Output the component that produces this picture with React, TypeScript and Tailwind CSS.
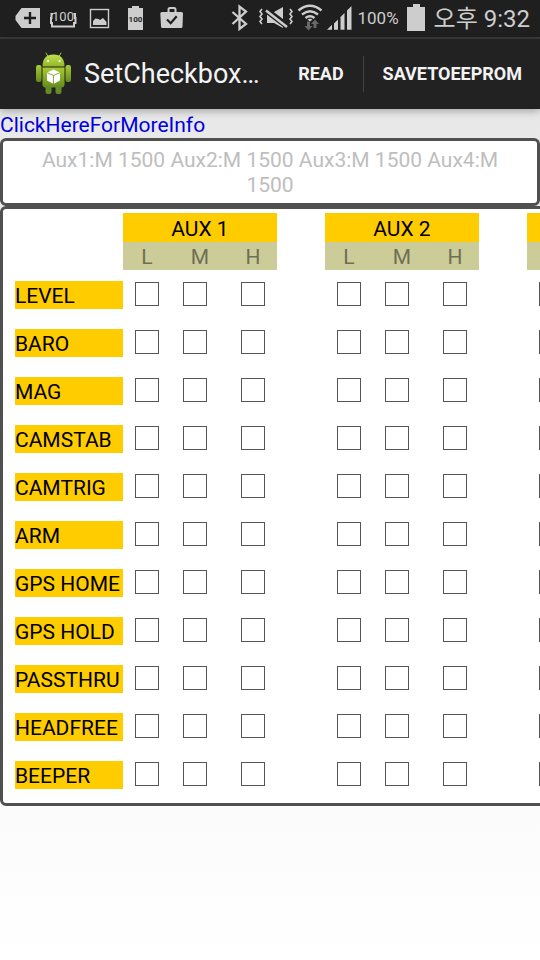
import React from "react";

const MODES = ["LEVEL", "BARO", "MAG", "CAMSTAB", "CAMTRIG", "ARM", "GPS HOME", "GPS HOLD", "PASSTHRU", "HEADFREE", "BEEPER"];
const CHANNELS = ["AUX 1", "AUX 2", "AUX 3", "AUX 4"];
const LEVELS = ["L", "M", "H"];

const HEAD_PAD = ["", "pl-[10px]", "pl-[10px]"];
const BOX_PAD = ["", "", "pl-[10px]"];

function NotificationIcons() {
  return (
    <div className="flex" aria-hidden="true">
      <svg className="h-[37px] w-9" viewBox="10 0 36 37">
        <path d="M21.5 8H40v20H21.5L15.5 20v-4z" fill="#cdcdcd" />
        <path d="M24 18h12M30 12v12" stroke="#1f1f1f" strokeWidth="2.4" />
      </svg>
      <svg className="h-[37px] w-9" viewBox="46 0 36 37">
        <path d="M53 14h-1.500v4h-.500v5h1v3.500h22V23h1.500v-5H75v-4h-1.500" fill="none" stroke="#cdcdcd" strokeWidth="2" />
        <text x="63" y="21" textAnchor="middle" fontSize="13" fill="#cdcdcd" fontFamily="Roboto, sans-serif">100</text>
      </svg>
      <svg className="h-[37px] w-9" viewBox="82 0 36 37">
        <rect x="90.500" y="9.500" width="18" height="18" fill="none" stroke="#cdcdcd" strokeWidth="1.400" />
        <path d="M93 25v-4l2.500-2.500 3 .5 1.500 1 3-2 3.500 4v3z" fill="#cdcdcd" />
      </svg>
      <svg className="h-[37px] w-9" viewBox="118 0 36 37">
        <path d="M132 6h7v2h4v22h-15V8h4z" fill="#cdcdcd" />
        <text x="135.500" y="21.500" textAnchor="middle" fontSize="8" fontWeight="700" fill="#1f1f1f" fontFamily="Roboto, sans-serif">100</text>
      </svg>
      <svg className="h-[37px] w-9" viewBox="154 0 36 37">
        <path d="M168.500 13v-3.500q0-1.500 1.500-1.500h4q1.500 0 1.500 1.500V13" fill="none" stroke="#cdcdcd" strokeWidth="2" />
        <path d="M162 12h19.500q1.500 0 1.500 1.500l-.5 13q0 1.500-1.500 1.500h-18.500q-1.500 0-1.500-1.500l-.7-13q0-1.500 1.700-1.500z" fill="#cdcdcd" />
        <path d="M167 19.500l3.700 3.700 6-7" fill="none" stroke="#1f1f1f" strokeWidth="2.200" />
      </svg>
    </div>
  );
}

function SystemIcons() {
  return (
    <div className="flex" aria-hidden="true">
      <svg className="h-[37px] w-7" viewBox="228 0 28 37">
        <path d="M232.500 12l13.500 12-6.500 5V6.500l6.500 5-13.500 12.500" fill="none" stroke="#cdcdcd" strokeWidth="2.300" />
      </svg>
      <svg className="h-[37px] w-10" viewBox="256 0 40 37">
        <path d="M262 9l-2 2.500 2 2.500-2 2.500 2 2.500-2 2.500 2 2.500M290 9l2 2.500-2 2.500 2 2.500-2 2.500 2 2.500-2 2.500" fill="none" stroke="#cdcdcd" strokeWidth="1.600" />
        <path d="M267 12h7l9-5v21l-9-5h-7z" fill="#cdcdcd" />
        <path d="M266 10l21 16" stroke="#1f1f1f" strokeWidth="6" />
        <path d="M266 10.500l21 16.500" stroke="#cdcdcd" strokeWidth="2.500" />
      </svg>
      <svg className="h-[37px] w-[30px]" viewBox="296 0 30 37">
        <path d="M298.500 10.500q11.500-9.500 23 0M302 14.500q8-6.500 16 0M305.500 18q4.500-3.500 9 0" fill="none" stroke="#cdcdcd" strokeWidth="2.300" />
        <path d="M307.500 19.500q2.500-1.500 5 0l-2.500 2z" fill="#cdcdcd" />
        <path d="M307 21.500h3v4.500h2.500l-4 4.500-4-4.500h2.500zM313.500 28h3v-4h2.500l-4-4.500-4 4.500h2.500z" fill="#686868" />
      </svg>
      <svg className="h-[37px] w-7" viewBox="326 0 28 37">
        <path d="M327 29.700l5-5v5zM334 23.500l4-4v10.200h-4zM340.500 17l4-4v16.700h-4zM347 10.500l4.500-4.500v23.700h-4.500z" fill="#cdcdcd" />
      </svg>
    </div>
  );
}

function Battery() {
  return (
    <svg className="h-[37px] w-[18px]" viewBox="407 0 18 37" aria-hidden="true">
      <path d="M413 4h7v3h5v24h-18V7h6z" fill="#cdcdcd" />
    </svg>
  );
}

function Robot() {
  return (
    <svg className="h-12 w-12 shrink-0" viewBox="30 50 48 48" aria-hidden="true">
      <defs>
        <linearGradient id="skin" x1="0" y1="0" x2="0" y2="1">
          <stop offset="0" stopColor="#a9cb33" />
          <stop offset="1" stopColor="#638c1c" />
        </linearGradient>
        <linearGradient id="head" x1="0" y1="0" x2="0" y2="1">
          <stop offset="0" stopColor="#c3df52" />
          <stop offset="1" stopColor="#90b826" />
        </linearGradient>
      </defs>
      <path d="M46 53l3 5M61 53l-3 5" stroke="#a4c639" strokeWidth="1" strokeLinecap="round" />
      <rect x="36" y="65" width="5.500" height="17" rx="2.200" fill="url(#skin)" />
      <rect x="65.500" y="65" width="5.500" height="17" rx="2.200" fill="url(#skin)" />
      <rect x="45.500" y="80" width="6" height="14" rx="2.200" fill="#66892a" />
      <rect x="55.500" y="80" width="6" height="14" rx="2.200" fill="#66892a" />
      <path d="M42.500 66.500q0-12 11-12t11 12z" fill="url(#head)" />
      <circle cx="48" cy="61" r="1.100" fill="#fff" />
      <circle cx="59.500" cy="61" r="1.100" fill="#fff" />
      <path d="M42.500 67.500h22v17q0 3-3 3h-16q-3 0-3-3z" fill="url(#skin)" />
      <path d="M53.500 69.500l6.500 3v8l-6.500 3.500-6.500-3.500v-8z" fill="#fff" />
      <path d="M47.200 72.700l6.300 2.800 6.300-2.800M53.500 75.500V84" fill="none" stroke="#86a93a" strokeWidth="1" />
    </svg>
  );
}

function AuxTable() {
  return (
    <table className="table-fixed border-collapse text-[21px] leading-[26px]">
      <colgroup>
        <col className="w-[108px]" />
        {CHANNELS.map((c) => (
          <React.Fragment key={c}>
            <col className="w-12" />
            <col className="w-12" />
            <col className="w-[58px]" />
            <col className="w-12" />
          </React.Fragment>
        ))}
      </colgroup>
      <thead>
        <tr className="h-[29px]">
          <td rowSpan={2} />
          {CHANNELS.map((c) => (
            <React.Fragment key={c}>
              <th colSpan={3} scope="colgroup" className="bg-[#ffcc00] px-0 pt-[3px] pb-0 text-center font-normal text-black">{c}</th>
              <td />
            </React.Fragment>
          ))}
        </tr>
        <tr className="h-7">
          {CHANNELS.map((c) => (
            <React.Fragment key={c}>
              {LEVELS.map((l, i) => (
                <th key={l} scope="col" className={`bg-[#cccc99] pt-[2px] pr-0 pb-0 text-center font-normal text-[#6f6f55] ${HEAD_PAD[i]}`}>{l}</th>
              ))}
              <td />
            </React.Fragment>
          ))}
        </tr>
      </thead>
      <tbody>
        {MODES.map((m) => (
          <tr key={m} className="h-12">
            <th scope="row" className="p-0 text-left align-middle font-normal whitespace-nowrap text-black">
              <span className="mt-px block bg-[#ffcc00] pt-[2px]">{m}</span>
            </th>
            {CHANNELS.map((c) => (
              <React.Fragment key={c}>
                {LEVELS.map((l, i) => (
                  <td key={l} className={`py-0 pr-0 align-middle ${BOX_PAD[i]}`}>
                    <input
                      type="checkbox"
                      aria-label={`${m} ${c} ${l}`}
                      className="mx-auto block size-6 appearance-none border border-[#555555] bg-white checked:bg-[#ffcc00]"
                    />
                  </td>
                ))}
                <td />
              </React.Fragment>
            ))}
          </tr>
        ))}
      </tbody>
    </table>
  );
}

export default function App() {
  return (
    <div className="flex min-h-screen flex-col bg-white font-[Roboto,'Noto_Sans_CJK_KR',sans-serif]">
      <div className="flex h-[39px] items-start justify-between border-b-2 border-[#3a3a3a] bg-[#1f1f1f] pr-[10px] pl-[10px] text-[#cdcdcd]">
        <NotificationIcons />
        <div className="flex items-center">
          <SystemIcons />
          <span className="mr-2 ml-[3px] text-[17px]">100%</span>
          <Battery />
          <span className="ml-[9px] text-2xl whitespace-nowrap">오후 9:32</span>
        </div>
      </div>
      <header className="z-10 flex h-[70px] items-center bg-[#222222] pl-[30px] text-[#f3f3f3] shadow-[0_2px_8px_rgba(0,0,0,0.3)]">
        <Robot />
        <h1 className="ml-[6px] flex-1 truncate text-[27px] leading-9">SetCheckbox…</h1>
        <button type="button" className="h-full px-[19px] text-lg font-bold">READ</button>
        <div className="h-9 w-px bg-[#444444]" />
        <button type="button" className="h-full pr-[18px] pl-[19px] text-lg font-bold">SAVETOEEPROM</button>
      </header>
      <main className="flex-1 bg-linear-to-b from-[#e8e8e8] to-white">
        <a href="#info" className="block h-[29px] pt-[2px] text-[21px] leading-7 text-[#0000dd]">ClickHereForMoreInfo</a>
        <p className="rounded-md border-3 border-[#505050] bg-white px-6 pt-[7px] pb-[5px] text-center text-[21px] leading-[25px] text-[#bebebe]">
          Aux1:M 1500 Aux2:M 1500 Aux3:M 1500 Aux4:M 1500
        </p>
        <div className="overflow-x-auto [scrollbar-width:none]">
          <div className="w-max rounded-md border-3 border-[#505050] bg-white px-3 pt-1 pb-[5px]">
            <AuxTable />
          </div>
        </div>
      </main>
    </div>
  );
}
